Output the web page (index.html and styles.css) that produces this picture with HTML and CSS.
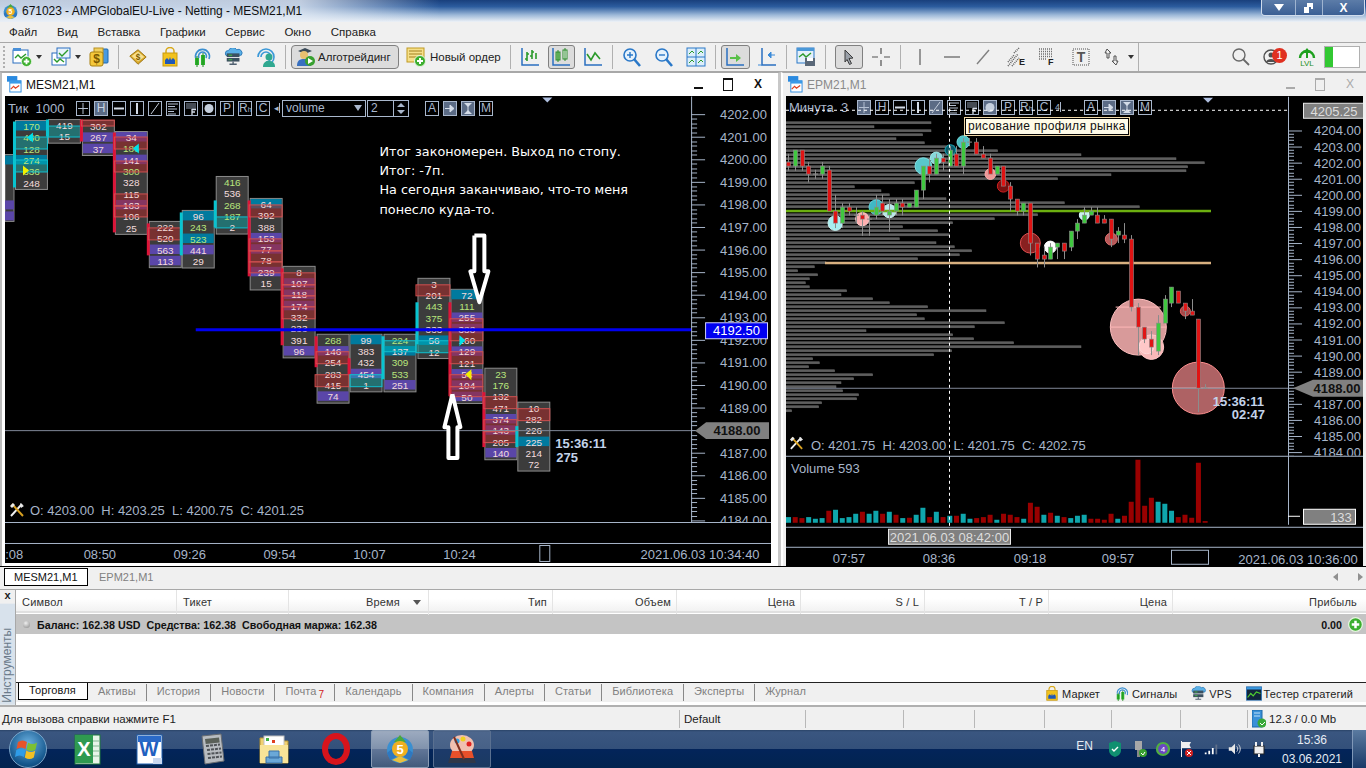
FILE: index.html
```html
<!DOCTYPE html>
<html lang="ru">
<head>
    <meta charset="UTF-8">
    <title>671023 - AMPGlobalEU-Live - Netting - MESM21,M1</title>
    <link rel="stylesheet" href="styles.css">
</head>
<body>
<svg class="defs" width="0" height="0">
    <defs>
        <symbol id="mt5" viewBox="0 0 32 32">
            <circle cx="16" cy="17" r="13" fill="#3a8fd0"/>
            <path d="M16 2l6 7H10z" fill="#4aa83c"/>
            <path d="M3 20l7-6 2 10-6 3zM29 20l-7-6-2 10 6 3z" fill="#2f78c0"/>
            <path d="M8 27l8-4 8 4-8 3z" fill="#e8c040"/>
            <circle cx="16" cy="16" r="8" fill="#f0b020"/>
            <text x="16" y="21" class="mt5-five">5</text>
        </symbol>
        <symbol id="plus" viewBox="0 0 12 12">
            <circle cx="6" cy="6" r="5.5" fill="#3cae2e" stroke="#e6f5e0"/>
            <path d="M6 3v6M3 6h6" stroke="#fff" stroke-width="2"/>
        </symbol>
        <symbol id="tools" viewBox="0 0 16 16">
            <path d="M2 14L13 2" stroke="#f0f0f0" stroke-width="2"/>
            <path d="M3 2l11 12" stroke="#d8a020" stroke-width="2"/>
            <path d="M1 4l3-3 2 2-3 3zM11 1l4 3-3 2z" fill="#e8e8e8"/>
        </symbol>
        <symbol id="bag" viewBox="0 0 20 20">
            <path d="M6 6V4a4 3.5 0 0 1 8 0v2" fill="none" stroke="#d8a818" stroke-width="1.5"/>
            <rect x="3" y="6" width="14" height="13" fill="#f2c21c" stroke="#c89a10"/>
            <path d="M5 17v-4l2-2 2 2 1-3 1 3 2-2 2 2v4z" fill="#1f58b8"/>
        </symbol>
        <symbol id="signal" viewBox="0 0 20 20">
            <path d="M4 12a7 7 0 1 1 13 0M7 11a4 4 0 1 1 7 0" fill="none" stroke="#3a8fd0" stroke-width="1.6"/>
            <rect x="3" y="11" width="4" height="7" fill="#2eb52e"/>
            <rect x="9" y="8" width="4" height="10" fill="#2eb52e"/>
            <path d="M5 9v11M11 6v14" stroke="#1e8a1e"/>
        </symbol>
        <symbol id="vps" viewBox="0 0 22 20">
            <path d="M4 9a3 3 0 0 1 1-6 5 5 0 0 1 9-1 4 4 0 0 1 5 6z" fill="#5ab0e6" stroke="#2a78b8"/>
            <rect x="3" y="6" width="14" height="4" fill="#3c5060"/>
            <rect x="3" y="11" width="14" height="4" fill="#3c5060"/>
            <path d="M5 8h4M5 13h4" stroke="#46d040"/>
            <path d="M10 15v3M6 18h8" stroke="#506070" stroke-width="1.5"/>
        </symbol>
        <symbol id="tester" viewBox="0 0 20 18">
            <rect x=".5" y=".5" width="19" height="17" fill="#10243c" stroke="#2a78c0"/>
            <rect x="1" y="1" width="18" height="3" fill="#3a98e0"/>
            <path d="M2 14l4-5 3 3 4-5 5 2" fill="none" stroke="#50d030" stroke-width="1.5"/>
        </symbol>
        <!-- glyphs of the buttons inside the charts -->
        <symbol id="ct-plus" viewBox="0 0 12 13"><path d="M6 1v11M1 6.500h10" stroke="#b4c0d2"/></symbol>
        <symbol id="ct-bar" viewBox="0 0 12 13"><path d="M1 6.500h10" stroke="#d4dce8" stroke-width="2"/></symbol>
        <symbol id="ct-vbar" viewBox="0 0 12 13"><path d="M6 1v11" stroke="#d4dce8" stroke-width="2"/></symbol>
        <symbol id="ct-slash" viewBox="0 0 12 13"><path d="M2 12L10 1" stroke="#c4cedc"/></symbol>
        <symbol id="ct-lines" viewBox="0 0 12 13"><path d="M1 2h10M1 4.500h7M1 7h9M1 9.500h6M1 12h8" stroke="#b4c0d2"/></symbol>
        <symbol id="ct-f" viewBox="0 0 12 13"><path d="M1 2h10M1 4h10M1 6h10" stroke="#8a96a8"/><path d="M7 7v6M7 7.500h4M7 10h3" stroke="#d4dce8" stroke-width="1.300"/></symbol>
        <symbol id="ct-dot" viewBox="0 0 12 13"><circle cx="6" cy="6.500" r="4.500" fill="#c4cedc"/></symbol>
        <symbol id="ct-arrow" viewBox="0 0 12 13"><path d="M1 6.500h7M6 3l4 3.500L6 10z" stroke="#d4dce8" fill="#d4dce8"/></symbol>
        <symbol id="ct-ibeam" viewBox="0 0 12 13"><path d="M2 1h8L6 5zM2 12h8L6 8z" fill="#d4dce8"/><path d="M6 4v5" stroke="#d4dce8"/></symbol>
    </defs>
</svg>

<header class="titlebar">
    <svg class="title-icon"><use href="#mt5"/></svg>
    <span class="title-text">671023 - AMPGlobalEU-Live - Netting - MESM21,M1</span>
    <div class="win-buttons">
        <span class="win-btn"><svg width="10" height="7" viewBox="0 0 10 7"><path d="M0 0h10L5 7z" fill="#fff"/></svg></span>
        <span class="win-btn narrow"><svg width="10" height="10" viewBox="0 0 10 10"><path d="M3 0h6v6H7V4H3zM0 4h5v6H0z" fill="#fff"/></svg></span>
        <span class="win-btn close">X</span>
    </div>
</header>

<nav class="menubar">
    <span>Файл</span><span>Вид</span><span>Вставка</span><span>Графики</span><span>Сервис</span><span>Окно</span><span>Справка</span>
</nav>

<div class="toolbar">
    <span class="grip"></span>
    <svg class="ico" viewBox="0 0 20 20"><rect x="1" y="3" width="15" height="13" fill="#fff" stroke="#2a6fc0"/><path d="M1 4V1h8v3" fill="#4a90d8"/><path d="M3 11l3-3 3 3 5-4" fill="none" stroke="#2a9a2a" stroke-width="1.4"/><use href="#plus" x="9" y="9" width="11" height="11"/></svg>
    <i class="caret"></i>
    <svg class="ico m9" viewBox="0 0 20 20"><rect x="1" y="6" width="14" height="12" fill="#fff" stroke="#2a6fc0"/><rect x="6" y="1" width="13" height="10" fill="#e8f2fc" stroke="#2a6fc0"/><path d="M3 12l3 3 3-3 4 3" fill="none" stroke="#2a9a2a" stroke-width="1.4"/><path d="M8 6l3 3 6-6" fill="none" stroke="#2a9a2a" stroke-width="1.4"/></svg>
    <i class="caret"></i>
    <svg class="ico m8" viewBox="0 0 20 20"><rect x="9" y="2" width="10" height="14" rx="1" fill="#4a9ae0" stroke="#1c68b0"/><rect x="5" y="1" width="9" height="6" fill="#f0d060" stroke="#b89020"/><rect x="1" y="5" width="13" height="14" rx="2" fill="#f4c83c" stroke="#a88010"/><text x="7.5" y="16" class="dollar">$</text></svg>
    <span class="sep"></span>
    <svg class="ico" viewBox="0 0 22 20"><path d="M2 9l9-7 9 8-9 8z" fill="#d8a828" stroke="#987010"/><path d="M4 9l7-5 7 6-7 5z" fill="#f8e090"/><text x="11" y="13" class="dollar small">$</text></svg>
    <svg class="ico g12" viewBox="0 0 20 20"><use href="#bag"/></svg>
    <svg class="ico g12" viewBox="0 0 20 20"><use href="#signal"/></svg>
    <svg class="ico g12" viewBox="0 0 22 20"><use href="#vps"/></svg>
    <svg class="ico g12" viewBox="0 0 20 20"><path d="M2 10a8 8 0 1 1 8 8M5 10a5 5 0 1 1 5 5" fill="none" stroke="#3a98d8" stroke-width="1.6"/><circle cx="13" cy="10" r="3.5" fill="#30a890"/><path d="M7 20c0-5 3-6 6-6s6 1 6 6z" fill="#30a890"/></svg>
    <span class="sep"></span>
    <button class="pill algo">
        <svg class="ico" viewBox="0 0 20 20"><path d="M3 4l7-3 7 3-7 3z" fill="#3a4a58"/><circle cx="9" cy="8" r="4" fill="#e8c070"/><path d="M2 19c0-6 3-7 7-7s7 1 7 7z" fill="#3870c0"/><circle cx="15" cy="14" r="5" fill="#38a030"/><path d="M13 11l5 3-5 3z" fill="#fff"/></svg>
        Алготрейдинг
    </button>
    <span class="order">
        <svg class="ico" viewBox="0 0 20 20"><rect x="1" y="1" width="17" height="14" fill="#f6e08a" stroke="#c09a20"/><path d="M3 4h13M3 7h13M3 10h9" stroke="#a08020"/><use href="#plus" x="8" y="8" width="12" height="12"/></svg>
        Новый ордер
    </span>
    <span class="sep"></span>
    <svg class="ico" viewBox="0 0 20 20"><path d="M2 1v17h17" fill="none" stroke="#2a6fc0" stroke-width="1.5"/><path d="M7 5v9M5 12h2M7 7h2M12 3v9M10 9h2M12 5h2M16 6v6" stroke="#2a9a2a" stroke-width="1.6" fill="none"/></svg>
    <span class="boxed b1"><svg class="ico" viewBox="0 0 20 20"><path d="M2 1v17h17" fill="none" stroke="#2a6fc0" stroke-width="1.5"/><rect x="5" y="5" width="4" height="8" fill="#8fd080" stroke="#2a8a2a"/><rect x="12" y="3" width="4" height="9" fill="#fff" stroke="#2a8a2a"/><path d="M7 3v12M14 1v13" stroke="#2a8a2a"/></svg></span>
    <svg class="ico" viewBox="0 0 20 20"><path d="M2 1v17h17" fill="none" stroke="#2a6fc0" stroke-width="1.5"/><path d="M4 7l4 6 4-7 5 6" fill="none" stroke="#2a9a2a" stroke-width="1.6"/></svg>
    <span class="sep"></span>
    <svg class="ico" viewBox="0 0 20 20"><circle cx="8" cy="8" r="6" fill="#e6f2fc" stroke="#2a78c8" stroke-width="1.6"/><path d="M8 5v6M5 8h6" stroke="#2a78c8" stroke-width="1.4"/><path d="M12 12l6 7" stroke="#2a78c8" stroke-width="2.6"/></svg>
    <svg class="ico g12" viewBox="0 0 20 20"><circle cx="8" cy="8" r="6" fill="#e6f2fc" stroke="#2a78c8" stroke-width="1.6"/><path d="M5 8h6" stroke="#2a78c8" stroke-width="1.4"/><path d="M12 12l6 7" stroke="#2a78c8" stroke-width="2.6"/></svg>
    <svg class="ico g12" viewBox="0 0 20 20"><rect x="1" y="1" width="18" height="18" fill="#dceefa" stroke="#2a78c8"/><path d="M10 1v18M1 10h18" stroke="#2a78c8"/><path d="M3 7l3-3 2 2M12 7l3-3 2 2M3 16l3-3 2 2M12 16l3-3 2 2" fill="none" stroke="#2a9a2a"/></svg>
    <span class="sep"></span>
    <span class="boxed b2"><svg class="ico" viewBox="0 0 20 20"><path d="M2 1v17h17" fill="none" stroke="#2a6fc0" stroke-width="1.5"/><path d="M5 10h6V7l5 4-5 4v-3H5z" fill="#58c048"/></svg></span>
    <svg class="ico" viewBox="0 0 20 20"><path d="M5 1v17h14" fill="none" stroke="#2a6fc0" stroke-width="1.5"/><path d="M1 18h4M11 8h7M11 8l3-3v6z" fill="#3a8ad8" stroke="#3a8ad8"/></svg>
    <span class="sep"></span>
    <svg class="ico" viewBox="0 0 20 20"><rect x="1" y="1" width="17" height="15" fill="#e4f0fa" stroke="#2a78c8"/><rect x="1" y="1" width="17" height="3" fill="#4a98d8"/><path d="M3 10l4-3 3 3 5-4" fill="none" stroke="#2a9a2a" stroke-width="1.4"/><rect x="9" y="11" width="10" height="8" fill="#5a6878"/><rect x="11" y="11" width="6" height="3" fill="#fff"/></svg>
    <span class="sep"></span>
    <span class="boxed b3"><svg class="ico-sm" viewBox="0 0 14 16"><path d="M3 1l8 8-4 .5 2.5 5-2 1-2.500-5L3 13z" fill="#9aa0a8" stroke="#3a3a3a"/></svg></span>
    <svg class="ico" viewBox="0 0 20 20"><path d="M10 1v6M10 13v6M1 10h6M13 10h6" stroke="#505050" stroke-width="1.2"/></svg>
    <span class="sep wide"></span>
    <svg class="ico" viewBox="0 0 20 20"><path d="M10 2v16" stroke="#808080" stroke-width="1.6"/></svg>
    <svg class="ico g12" viewBox="0 0 20 20"><path d="M2 10h16" stroke="#808080" stroke-width="1.6"/></svg>
    <svg class="ico g11" viewBox="0 0 20 20"><path d="M4 17L16 3" stroke="#808080" stroke-width="1.4"/></svg>
    <svg class="ico g14" viewBox="0 0 20 20"><path d="M1 15l6-7M1 19l10-12M5 19l7-8M7 6l5-5" stroke="#606060" stroke-dasharray="1 1" fill="none" stroke-width="1.600"/><text x="12" y="18" class="glyph-b">E</text></svg>
    <svg class="ico g10" viewBox="0 0 20 20"><path d="M2 2h14M2 4.500h14M2 7h14M2 9.500h14" stroke="#707070" stroke-dasharray="1 1" stroke-width="1.300"/><path d="M2 12h8" stroke="#707070" stroke-dasharray="1 1" stroke-width="1.300"/><text x="11" y="18" class="glyph-b">F</text></svg>
    <svg class="ico g14" viewBox="0 0 20 20"><rect x="2" y="2" width="16" height="16" fill="none" stroke="#505050" stroke-dasharray="1 1"/><text x="10" y="15" class="glyph-b mid">T</text></svg>
    <svg class="ico g13" viewBox="0 0 20 20"><path d="M3 2l4 4H5v5H3V6H1zM12 18l-4-4h2V9h2v5h2z" fill="none" stroke="#505050"/></svg>
    <i class="caret dark"></i>
    <span class="sep end"></span>
    <span class="tb-spacer"></span>
    <svg class="ico" viewBox="0 0 20 20"><circle cx="8" cy="8" r="6" fill="none" stroke="#686868" stroke-width="1.4"/><path d="M12 12l6 6" stroke="#686868" stroke-width="1.8"/></svg>
    <span class="profile">
        <svg class="ico" viewBox="0 0 20 20"><circle cx="8" cy="10" r="7" fill="none" stroke="#505050" stroke-width="1.4"/><circle cx="8" cy="8" r="2.5" fill="#505050"/><path d="M3 15c1-4 9-4 10 0" fill="#505050"/></svg>
        <b class="badge">1</b>
    </span>
    <span class="lvl">
        <svg width="18" height="15" viewBox="0 0 18 15"><path d="M2 13a7 7 0 0 1 14 0" fill="none" stroke="#1ea01e" stroke-width="2.4"/><path d="M9 3l4 5h-3v5H8V8H5z" fill="#1ea01e"/></svg>
        <span>LVL</span>
    </span>
    <span class="meter"><i></i></span>
</div>

<main class="mdi">
    <section class="win active">
        <div class="win-head">
            <svg class="doc-icon" viewBox="0 0 16 18"><rect x="0" y="0" width="11" height="6" fill="#2a8ae0"/><rect x="3" y="5" width="12" height="12" fill="#fff" stroke="#2a8ae0"/><rect x="3" y="5" width="12" height="3" fill="#3a9ae8"/><path d="M4 14l3-3 2 2 4-3" fill="none" stroke="#e04020" stroke-width="1.3"/></svg>
            <span class="doc-title">MESM21,M1</span>
            <span class="doc-btns"><i class="d-min"></i><i class="d-max"></i><i class="d-close">X</i></span>
        </div>
        <div class="chart" id="chart-left">
            <div class="strip strip-left">
                <span class="strip-label">Тик&nbsp;&nbsp;1000</span>
                <span class="ct"><svg><use href="#ct-plus"/></svg></span><span class="ct on">H</span><span class="ct"><svg><use href="#ct-bar"/></svg></span><span class="ct"><svg><use href="#ct-vbar"/></svg></span><span class="ct"><svg><use href="#ct-slash"/></svg></span><span class="ct"><svg><use href="#ct-lines"/></svg></span><span class="ct"><svg><use href="#ct-f"/></svg></span><span class="ct"><svg><use href="#ct-dot"/></svg></span><span class="ct">P</span><span class="ct">R<small>h</small></span><span class="ct">C</span>
                <span class="ct-mini">◂</span>
                <span class="combo">volume<i class="combo-arrow"></i></span>
                <span class="spin">2</span>
                <span class="spin-btns"><i></i><i></i></span>
                <span class="ct push">A</span><span class="ct on"><svg><use href="#ct-arrow"/></svg></span><span class="ct on"><svg><use href="#ct-ibeam"/></svg></span><span class="ct">M</span>
            </div>
            <svg class="plot" id="plot-left" viewBox="5 97 767 467"></svg>
        </div>
    </section>
    <section class="win">
        <div class="win-head dim">
            <svg class="doc-icon" viewBox="0 0 16 18"><rect x="0" y="0" width="11" height="6" fill="#2a8ae0"/><rect x="3" y="5" width="12" height="12" fill="#fff" stroke="#2a8ae0"/><rect x="3" y="5" width="12" height="3" fill="#3a9ae8"/><path d="M4 14l3-3 2 2 4-3" fill="none" stroke="#e04020" stroke-width="1.3"/></svg>
            <span class="doc-title">EPM21,M1</span>
            <span class="doc-btns"><i class="d-min"></i><i class="d-max"></i><i class="d-close">X</i></span>
        </div>
        <div class="chart" id="chart-right">
            <div class="strip strip-right">
                <span class="strip-label">Минута&nbsp;&nbsp;3</span>
                <span class="ct on"><svg><use href="#ct-plus"/></svg></span><span class="ct">H</span><span class="ct"><svg><use href="#ct-bar"/></svg></span><span class="ct"><svg><use href="#ct-vbar"/></svg></span><span class="ct on"><svg><use href="#ct-slash"/></svg></span><span class="ct"><svg><use href="#ct-lines"/></svg></span><span class="ct"><svg><use href="#ct-f"/></svg></span><span class="ct on"><svg><use href="#ct-dot"/></svg></span><span class="ct">P</span><span class="ct">R<small>h</small></span><span class="ct">C</span>
                <span class="ct-mini">4</span>
                <span class="ct push2">A</span><span class="ct on"><svg><use href="#ct-arrow"/></svg></span><span class="ct on"><svg><use href="#ct-ibeam"/></svg></span><span class="ct">M</span>
            </div>
            <svg class="plot" id="plot-right" viewBox="786 97 577 469"></svg>
            <div class="hint">рисование профиля рынка</div>
        </div>
    </section>
</main>

<div class="doc-tabs">
    <span class="doc-tab on">MESM21,M1</span>
    <span class="doc-tab">EPM21,M1</span>
    <span class="tab-arrows"><i class="ar-l"></i><i class="ar-r"></i></span>
</div>

<section class="terminal">
    <aside class="side">
        <b class="side-x">x</b>
        <span class="side-label">Инструменты</span>
    </aside>
    <div class="term-main">
        <div class="grid-head">
            <span class="left">Символ</span>
            <span class="left">Тикет</span>
            <span class="time-col">Время<i class="sort"></i></span>
            <span>Тип</span><span>Объем</span><span>Цена</span><span>S / L</span><span>T / P</span><span>Цена</span><span>Прибыль</span>
        </div>
        <div class="balance">
            <i class="dot"></i>
            <b>Баланс: 162.38 USD&nbsp; Средства: 162.38&nbsp; Свободная маржа: 162.38</b>
            <b class="bal-profit">0.00</b>
            <svg class="bal-plus"><use href="#plus"/></svg>
        </div>
        <div class="term-empty"></div>
        <div class="term-tabs">
            <span class="t-tab on">Торговля</span>
            <span class="t-tab">Активы</span><span class="t-tab">История</span><span class="t-tab">Новости</span>
            <span class="t-tab">Почта<sub class="mail">7</sub></span>
            <span class="t-tab">Календарь</span><span class="t-tab">Компания</span><span class="t-tab">Алерты</span><span class="t-tab">Статьи</span><span class="t-tab">Библиотека</span><span class="t-tab">Эксперты</span><span class="t-tab last">Журнал</span>
            <span class="t-links">
                <span><svg viewBox="0 0 20 20"><use href="#bag"/></svg>Маркет</span>
                <span><svg viewBox="0 0 20 20"><use href="#signal"/></svg>Сигналы</span>
                <span><svg viewBox="0 0 22 20"><use href="#vps"/></svg>VPS</span>
                <span><svg viewBox="0 0 20 18"><use href="#tester"/></svg>Тестер стратегий</span>
            </span>
        </div>
    </div>
</section>

<footer class="statusbar">
    <span class="st st-help">Для вызова справки нажмите F1</span>
    <span class="st st-profile">Default</span>
    <span class="st w98"></span><span class="st w71"></span><span class="st w70"></span><span class="st w67"></span><span class="st w69"></span><span class="st w67"></span>
    <span class="st st-net">
        <svg width="14" height="18" viewBox="0 0 14 18"><rect x="0" y="0" width="10" height="17" fill="#3a90d8" stroke="#1c68a8"/><path d="M2 3h6M2 6h6" stroke="#bfe0f8"/><circle cx="10" cy="13" r="4.5" fill="#38a838"/><path d="M8 13l2 2 3-3" stroke="#fff" fill="none"/></svg>
        12.3 / 0.0 Mb
    </span>
</footer>

<div class="taskbar">
    <span class="orb">
        <svg width="26" height="26" viewBox="0 0 26 26"><path d="M3 6c3-2 6-2 9 0l-1.500 7c-3-2-6-2-9 0z" fill="#e8542a"/><path d="M13 6.500c3 2 6 2 9 0l-1.500 7c-3 2-6 2-9 0z" fill="#7cc034"/><path d="M1.300 14c3-2 6-2 9 0L9 21c-3-2-6-2-9 0z" fill="#2f9ce8"/><path d="M11.300 14.500c3 2 6 2 9 0l-1.500 7c-3 2-6 2-9 0z" fill="#f4c024"/></svg>
    </span>
    <span class="task"><svg viewBox="0 0 32 32"><rect x="3" y="2" width="25" height="29" fill="#e8f4e8" stroke="#1f7a3c"/><path d="M3 2h18v28H3z" fill="#2f9a50"/><text x="12" y="23" class="task-letter">X</text><path d="M21 8h7M21 13h7M21 18h7M21 23h7" stroke="#80b890"/></svg></span>
    <span class="task"><svg viewBox="0 0 32 32"><rect x="3" y="2" width="25" height="29" fill="#fff" stroke="#2060b0"/><rect x="4" y="3" width="23" height="6" fill="#2a6ac8"/><text x="15" y="23" class="task-letter word">W</text><path d="M19 25h9v6h-9z" fill="#c8d8f0"/></svg></span>
    <span class="task"><svg viewBox="0 0 32 32"><path d="M6 3l19-2 3 27-19 3z" fill="#b8bcc0" stroke="#686c70"/><path d="M9 6l14-1.500.7 5-14 1.500z" fill="#5a6058"/><path d="M10 13l14-1.500M11 17l14-1.500M11.500 21l14-1.500M12 25l14-1.500" stroke="#505458" stroke-width="2" stroke-dasharray="3 1"/></svg></span>
    <span class="task"><svg viewBox="0 0 32 32"><path d="M2 5h11l2 3h15v22H2z" fill="#f0d070" stroke="#b09030"/><rect x="6" y="3" width="20" height="10" fill="#fff" stroke="#c0c0c0"/><path d="M8 5h3v3H8z" fill="#40b040"/><path d="M14 7h3v3h-3z" fill="#e04020"/><path d="M2 12h28v18H2z" fill="#f8e498"/><path d="M8 24h16v6H8zM11 18h10v7H11z" fill="#6aa8d8" stroke="#3870a8"/></svg></span>
    <span class="task"><svg viewBox="0 0 32 32"><ellipse cx="16" cy="16" rx="11" ry="13" fill="none" stroke="#d8141c" stroke-width="6"/></svg></span>
    <span class="task running"><svg viewBox="0 0 32 32"><use href="#mt5"/></svg></span>
    <span class="task running pale"><svg viewBox="0 0 32 32"><ellipse cx="16" cy="12" rx="12" ry="10" fill="#f0c0b0"/><circle cx="11" cy="8" r="2.500" fill="#30a0e0"/><circle cx="17" cy="6" r="2.500" fill="#f0d020"/><circle cx="23" cy="11" r="2.500" fill="#e02020"/><path d="M4 24h24l2 6H2z" fill="#303848"/><path d="M6 18h20l2 7H4z" fill="#e8502a"/><path d="M8 4l10 22" stroke="#803020" stroke-width="2"/></svg></span>
    <span class="tray">
        <span class="lang">EN</span>
        <svg viewBox="0 0 16 18"><path d="M8 1l6 2v7c0 4-3 6-6 7-3-1-6-3-6-7V3z" fill="#109070"/><path d="M5 9l2 2 4-4" stroke="#fff" fill="none" stroke-width="1.4"/></svg>
        <svg viewBox="0 0 16 18"><rect x="4" y="1" width="7" height="9" fill="#a8a8a8"/><rect x="6" y="10" width="3" height="7" fill="#888"/><circle cx="12" cy="13" r="4" fill="#38a030"/><path d="M10 13l2 2 2-3" stroke="#fff" fill="none"/></svg>
        <svg viewBox="0 0 18 18"><circle cx="9" cy="9" r="8" fill="#50b040"/><circle cx="9" cy="9" r="5.500" fill="#6a48c0"/><text x="9" y="12" class="tray-num">4</text></svg>
        <svg viewBox="0 0 16 18"><path d="M2 1h1v16H2zM3 2h9l-1.500 3L12 8H3z" fill="#f0f0f0"/><circle cx="10" cy="13" r="4" fill="#d02020"/><path d="M8 11l4 4M12 11l-4 4" stroke="#fff"/></svg>
        <svg viewBox="0 0 18 18"><path d="M2 13h2v2H2zM6 11h2v4H6zM10 8h2v7h-2z" fill="#fff"/><path d="M14 4h2v11h-2z" fill="#60708a"/></svg>
        <svg viewBox="0 0 18 18"><path d="M2 7h3l4-4v12l-4-4H2z" fill="#e8e8e8"/><path d="M11 6c1.500 2 1.500 4 0 6M13 4c2.500 3 2.500 7 0 10" stroke="#e8e8e8" fill="none"/></svg>
        <svg viewBox="0 0 16 18"><rect x="3" y="6" width="10" height="8" fill="#f0f0f0" stroke="#222"/><path d="M5 2v4M11 2v4M8 14v3" stroke="#f0f0f0" stroke-width="2"/></svg>
        <span class="clock"><span>15:36</span><span>03.06.2021</span></span>
    </span>
    <span class="show-desktop"></span>
</div>

<script src="chart.js"></script>
</body>
</html>
```

FILE: styles.css
```css
* {
    box-sizing: border-box;
}
html, body {
    margin: 0;
    padding: 0;
    width: 1366px;
    height: 768px;
    overflow: hidden;
}
body {
    display: flex;
    flex-direction: column;
    font-family: "Liberation Sans", Arial, sans-serif;
    font-size: 11px;
    color: #1c1c1c;
    background: #f0f0f0;
}
.defs {
    position: absolute;
}
.mt5-five {
    font: bold 13px "Liberation Sans", sans-serif;
    fill: #fff;
    text-anchor: middle;
}

/* title bar */
.titlebar {
    height: 22px;
    display: flex;
    align-items: center;
    position: relative;
    background:
        linear-gradient(90deg, rgba(232,238,246,.8) 0, rgba(232,238,246,.8) 300px, rgba(232,238,246,0) 440px),
        linear-gradient(180deg, #193f7c 0, #2c5c9e 30%, #9db8d8 68%, #eef2f7 100%);
}
.title-icon {
    width: 17px;
    height: 17px;
    margin: 2px 3px 0 2px;
}
.title-text {
    font-size: 12px;
    color: #101010;
    white-space: nowrap;
    letter-spacing: -.04px;
}
.win-buttons {
    position: absolute;
    right: 1px;
    top: 0;
    height: 16px;
    display: flex;
    border: 1px solid #d0dcec;
    border-top: 0;
    border-radius: 0 0 4px 4px;
    overflow: hidden;
}
.win-btn {
    width: 34px;
    display: flex;
    align-items: center;
    justify-content: center;
    background: linear-gradient(180deg, #5c7ca8, #3b5f94);
    border-right: 1px solid #9fb4d0;
}
.win-btn.narrow {
    width: 27px;
}
.win-btn.close {
    width: 41px;
    border: 0;
    color: #fff;
    font-weight: bold;
    font-size: 12px;
}

/* menu */
.menubar {
    height: 20px;
    display: flex;
    align-items: center;
    gap: 19.7px;
    padding-left: 9px;
    font-size: 11.5px;
    color: #222;
}

/* toolbar */
.toolbar {
    height: 30px;
    display: flex;
    align-items: center;
    padding-left: 3px;
    border-top: 1px solid #a8a8a8;
    border-bottom: 1px solid #a8a8a8;
}
.grip {
    width: 2px;
    height: 22px;
    margin-right: 7px;
    border-left: 2px dotted #b0b0b0;
}
.ico {
    width: 20px;
    height: 20px;
    flex: none;
}
.ico-sm {
    width: 14px;
    height: 16px;
}
.caret {
    width: 0;
    height: 0;
    margin: 0 0 0 4px;
    border: 3.5px solid transparent;
    border-top: 4px solid #333;
    border-bottom: 0;
}
.m9 { margin-left: 9px; }
.m8 { margin-left: 8px; }
.g10 { margin-left: 10px; }
.g11 { margin-left: 11px; }
.g12 { margin-left: 12px; }
.g13 { margin-left: 13px; }
.g14 { margin-left: 14px; }
.sep {
    width: 1px;
    height: 24px;
    margin: 0 9px;
    background: #b0b0b0;
}
.sep.wide {
    margin-right: 9px;
}
.sep.end {
    margin-left: 4px;
    height: 28px;
}
.dollar {
    font: bold 12px "Liberation Sans", sans-serif;
    fill: #7a5800;
    text-anchor: middle;
}
.dollar.small {
    font-size: 9px;
}
.glyph-b {
    font: bold 9px "Liberation Sans", sans-serif;
    fill: #222;
}
.glyph-b.mid {
    font-size: 14px;
    text-anchor: middle;
    fill: #555;
}
.pill {
    width: 108px;
    height: 24px;
    padding: 0 0 0 3px;
    margin-left: -4px;
    display: flex;
    align-items: center;
    gap: 3px;
    font: 11.5px "Liberation Sans", sans-serif;
    color: #222;
    background: #dcdcdc;
    border: 1px solid #808080;
    border-radius: 4px;
}
.order {
    display: flex;
    align-items: center;
    gap: 4px;
    margin-left: 7px;
    font-size: 11.5px;
    color: #222;
}
.boxed {
    height: 24px;
    display: flex;
    align-items: center;
    justify-content: center;
    background: #dcdcdc;
    border: 1px solid #808080;
    border-radius: 3px;
}
.b1 {
    width: 27px;
    margin: 0 8px;
}
.b2 {
    width: 29px;
    margin: 0 7px 0 -4px;
}
.b3 {
    width: 28px;
    margin: 0 8px 0 0;
}
.tb-spacer {
    flex: 1;
}
.profile {
    position: relative;
    margin-left: 12px;
    width: 24px;
    height: 20px;
}
.badge {
    position: absolute;
    left: 9px;
    top: 1px;
    width: 15px;
    height: 15px;
    border-radius: 50%;
    background: #e03020;
    color: #fff;
    font-size: 11px;
    font-weight: normal;
    line-height: 15px;
    text-align: center;
}
.lvl {
    margin-left: 11px;
    width: 18px;
    display: flex;
    flex-direction: column;
    align-items: center;
    font-size: 8px;
    line-height: 8px;
    color: #1e901e;
}
.meter {
    width: 36px;
    height: 22px;
    margin: 0 6px 0 8px;
    background: #fff;
    border: 1px solid #b0b0b0;
    display: flex;
}
.meter i {
    width: 8px;
    background: #32c832;
}

/* chart windows */
.mdi {
    height: 496px;
    display: grid;
    grid-template-columns: 781px 585px;
    background: #c8c8c8;
}
.win {
    display: flex;
    flex-direction: column;
    padding: 0 6px 3px 5px;
    background: #fff;
    border-left: 2px solid #bdbdbd;
    border-top: 1px solid #a8a8a8;
}
.win + .win {
    padding: 0 3px 0 3px;
    background: #f0f0f0;
    border-left: 2px solid #fff;
}
.win.active {
    padding: 0 7px 3px 3px;
    border-right: 3px solid #c8c8c8;
}
.win-head {
    height: 23px;
    display: flex;
    align-items: center;
    gap: 4px;
    font-size: 12px;
    color: #111;
    flex: none;
}
.win-head.dim {
    color: #8a8a8a;
}
.doc-icon {
    width: 15px;
    height: 17px;
    margin-left: 2px;
}
.doc-title {
    margin-top: 2px;
}
.doc-btns {
    margin-left: auto;
    display: flex;
    align-items: center;
    width: 88px;
    justify-content: space-between;
    padding: 0 9px 0 11px;
}
.win-head .d-min {
    width: 9px;
    height: 2px;
    background: #111;
    margin-top: 7px;
}
.win-head .d-max {
    width: 10px;
    height: 13px;
    border: 1px solid #111;
    border-top-width: 2px;
}
.win-head .d-close {
    font-style: normal;
    font-size: 12px;
    font-weight: bold;
}
.win-head.dim .d-min {
    background: #aaa;
}
.win-head.dim .d-max {
    border-color: #aaa;
}
.win-head.dim .d-close {
    color: #aaa;
    font-weight: normal;
}
.chart {
    position: relative;
    flex: 1;
    background: #000;
    overflow: hidden;
}
.plot {
    position: absolute;
    left: 0;
    top: 0;
    width: 100%;
    height: 100%;
}
.strip {
    position: absolute;
    top: 4px;
    left: 0;
    right: 0;
    display: flex;
    align-items: center;
    gap: 4px;
    color: #a9b7cc;
    font-size: 13px;
}
.strip-label {
    white-space: nowrap;
}
.strip-left .strip-label {
    width: 67px;
    padding-left: 3px;
}
.strip-right .strip-label {
    width: 67px;
    padding-left: 3px;
}
.ct {
    width: 14px;
    height: 15px;
    flex: none;
    border: 1px solid #a9b7cc;
    font-size: 12px;
    line-height: 13px;
    text-align: center;
    overflow: hidden;
}
.ct svg {
    display: block;
    width: 12px;
    height: 13px;
}
.ct small {
    font-size: 7px;
}
.ct.on {
    background: #5b6b85;
    color: #c8d2e0;
}
.ct-mini {
    width: 6px;
    font-size: 9px;
    border-right: 1px solid #a9b7cc;
}
.combo {
    width: 84px;
    height: 17px;
    margin-left: -2px;
    padding-left: 3px;
    display: flex;
    align-items: center;
    justify-content: space-between;
    border: 1px solid #a9b7cc;
    font-size: 12px;
}
.combo-arrow {
    margin-right: 3px;
    border: 4px solid transparent;
    border-top: 6px solid #a9b7cc;
    border-bottom: 0;
}
.spin {
    width: 27px;
    height: 17px;
    margin-left: -3px;
    padding-left: 3px;
    border: 1px solid #a9b7cc;
    font-size: 12px;
}
.spin-btns {
    width: 15px;
    height: 17px;
    margin-left: -4px;
    display: flex;
    flex-direction: column;
    justify-content: space-around;
    align-items: center;
    border: 1px solid #a9b7cc;
    border-left: 0;
}
.spin-btns i {
    border: 4px solid transparent;
    border-bottom: 4px solid #a9b7cc;
    border-top: 0;
}
.spin-btns i + i {
    border-top: 4px solid #a9b7cc;
    border-bottom: 0;
}
.push {
    margin-left: 12px;
}
.push2 {
    margin-left: 19px;
}
.hint {
    position: absolute;
    left: 178px;
    top: 21px;
    height: 19px;
    padding: 0 3px;
    background: #fffbe8;
    border: 1px solid #f0d8a8;
    outline: 1px solid #000;
    outline-offset: -2px;
    color: #111;
    font-size: 12px;
    line-height: 17px;
    letter-spacing: .35px;
    white-space: nowrap;
}

/* chart drawing, the svg is filled by chart.js */
.plot text {
    font-family: "Liberation Sans", Arial, sans-serif;
}
.axis-t {
    font-size: 13px;
    fill: #a7b5c9;
    text-anchor: end;
}
.ohlc {
    font-size: 13px;
    fill: #a7b5c9;
}
.date-t {
    font-size: 13px;
    fill: #a7b5c9;
    text-anchor: middle;
}
.cell-t {
    font-size: 10px;
    text-anchor: middle;
    fill: #f4dcdc;
}
.cell-t.g {
    fill: #b8e67c;
}
.plot .note {
    font-family: "DejaVu Sans", sans-serif;
    font-size: 12.8px;
    fill: #fff;
}
.cntd {
    font-size: 13px;
    font-weight: bold;
    fill: #c3d3ea;
}
.box-t {
    font-size: 13px;
    text-anchor: middle;
}
.box-t.w {
    fill: #fff;
}
.box-t.b {
    fill: #111;
    font-weight: bold;
}
.box-t.l {
    fill: #ddd;
}

/* tabs under the charts */
.doc-tabs {
    height: 20px;
    padding: 1px 0 0 4px;
    display: flex;
    align-items: flex-start;
    background: #f0f0f0;
    border-top: 1px solid #000;
}
.doc-tab {
    height: 18px;
    padding: 3px 10px 0 11px;
    color: #808080;
    line-height: 12px;
}
.doc-tab.on {
    width: 84px;
    padding-left: 9px;
    background: #fff;
    color: #111;
    border: 1px solid #000;
    border-top-color: #000;
    padding-top: 2px;
}
.tab-arrows {
    margin-left: auto;
    display: flex;
    gap: 20px;
    padding: 5px 3px 0 0;
}
.ar-l {
    border: 4px solid transparent;
    border-right: 5px solid #909090;
    border-left: 0;
}
.ar-r {
    border: 4px solid transparent;
    border-left: 5px solid #909090;
    border-right: 0;
}

/* terminal */
.terminal {
    height: 116px;
    display: flex;
    margin-top: 3px;
    border-top: 1px solid #a8a8a8;
}
.side {
    width: 15px;
    display: flex;
    flex-direction: column;
    align-items: center;
    flex: none;
    background: #f0f0f0;
}
.side-x {
    height: 14px;
    font-size: 11px;
    line-height: 11px;
}
.side-label {
    flex: 1;
    width: 100%;
    writing-mode: vertical-rl;
    transform: rotate(180deg);
    background: #d8e2ec;
    color: #6a7a8a;
    font-size: 12px;
    text-align: left;
    line-height: 14px;
    padding-top: 2px;
}
.term-main {
    flex: 1;
    display: flex;
    flex-direction: column;
    background: #fff;
    border-left: 1px solid #a8a8a8;
}
.grid-head {
    height: 23px;
    display: grid;
    grid-template-columns: 161px 112px 140px 124px 124px 124px 124px 124px 124px 193px;
    align-items: center;
    background: linear-gradient(180deg, #fff 0, #fff 40%, #f2f2f2 100%);
    border-bottom: 2px solid #e0e0e0;
    font-size: 11px;
    letter-spacing: .2px;
    color: #333;
}
.grid-head span {
    height: 100%;
    line-height: 25px;
    text-align: right;
    padding: 0 5px 0 6px;
    border-right: 1px solid #e4e4e4;
}
.grid-head .left {
    text-align: left;
}
.grid-head span:last-child {
    padding-right: 9px;
    border: 0;
}
.grid-head .time-col {
    padding-right: 28px;
    position: relative;
}
.sort {
    position: absolute;
    right: 7px;
    top: 10px;
    border: 4px solid transparent;
    border-top: 5px solid #555;
    border-bottom: 0;
}
.balance {
    height: 20px;
    margin-top: 1px;
    display: flex;
    align-items: center;
    padding: 1px 3px 0 7px;
    background: #c4c4c4;
    color: #111;
    font-size: 10.7px;
}
.dot {
    width: 7px;
    height: 7px;
    margin-right: 7px;
    border-radius: 50%;
    background: radial-gradient(circle at 40% 30%, #eee, #888);
}
.bal-profit {
    margin-left: auto;
}
.bal-plus {
    width: 15px;
    height: 15px;
    margin-left: 6px;
}
.term-empty {
    flex: 1;
}
.term-tabs {
    height: 23px;
    display: flex;
    align-items: flex-start;
    padding: 0 0 0 2px;
    background: #f0f0f0;
    border-top: 1px solid #222;
    border-bottom: 3px solid #fff;
    color: #808080;
    letter-spacing: .1px;
}
.t-tab {
    height: 17px;
    padding: 0 10px;
    line-height: 15px;
    margin-top: 1px;
    border-right: 1px solid #888;
    white-space: nowrap;
}
.t-tab.on {
    width: 70px;
    margin-top: 0;
    padding: 0 0 0 10px;
    background: #fff;
    color: #111;
    border: 1px solid #000;
    border-top: 0;
}
.t-tab.last {
    border: 0;
}
.mail {
    color: #d02020;
    font-size: 10px;
    line-height: 0;
    margin-left: 2px;
}
.t-links {
    margin-left: auto;
    display: flex;
    gap: 14px;
    padding: 2px 13px 0 0;
    color: #222;
}
.t-links span {
    display: flex;
    align-items: center;
    gap: 2px;
    height: 17px;
}
.t-links svg {
    width: 16px;
    height: 15px;
}

/* status bar */
.statusbar {
    height: 25px;
    display: flex;
    align-items: center;
    background: #f0f0f0;
    border-top: 2px solid #b0b0b0;
    font-size: 11.5px;
}
.st {
    height: 18px;
    line-height: 18px;
    padding-left: 3px;
    border-right: 1px solid #b8b8b8;
    white-space: nowrap;
}
.st-help {
    width: 680px;
    padding-left: 2px;
}
.st-profile {
    width: 126px;
    padding-left: 4px;
}
.w98 { width: 98px; }
.w71 { width: 71px; }
.w70 { width: 70px; }
.w67 { width: 67px; }
.w69 { width: 69px; }
.st-net {
    border: 0;
    display: flex;
    align-items: center;
    gap: 3px;
    padding-left: 4px;
}

/* windows taskbar */
.taskbar {
    flex: 1;
    display: flex;
    align-items: center;
    position: relative;
    padding-left: 9px;
    background: linear-gradient(180deg, #2a4468 0, #3a5680 2px, #33507a 50%, #03245a 50%, #02244f 100%);
    color: #e6ecf4;
}
.orb {
    width: 38px;
    height: 38px;
    margin-right: 10px;
    display: flex;
    align-items: center;
    justify-content: center;
    border-radius: 50%;
    background: radial-gradient(circle at 50% 35%, #6ab0e0, #14568c 70%, #0a3a60);
    border: 1px solid #7aa4c8;
}
.task {
    width: 62px;
    height: 38px;
    display: flex;
    align-items: center;
    justify-content: center;
}
.task svg {
    width: 32px;
    height: 32px;
}
.task.running {
    width: 58px;
    margin-left: 4px;
    background: linear-gradient(180deg, rgba(255,255,255,.5), rgba(255,255,255,.25));
    border: 1px solid #8a9cb4;
    border-radius: 2px;
}
.task.running.pale {
    background: rgba(255,255,255,.1);
    border-color: #5a7090;
}
.task-letter {
    font: bold 20px "Liberation Sans", sans-serif;
    fill: #fff;
    text-anchor: middle;
}
.task-letter.word {
    fill: #1f60c0;
}
.tray {
    margin-left: auto;
    margin-right: 11px;
    display: flex;
    align-items: center;
    gap: 8px;
    font-size: 12px;
}
.tray svg {
    width: 16px;
    height: 18px;
}
.tray-num {
    font: 9px "Liberation Sans", sans-serif;
    fill: #fff;
    text-anchor: middle;
}
.lang {
    margin-right: 6px;
    margin-top: -6px;
}
.clock {
    width: 86px;
    display: flex;
    flex-direction: column;
    align-items: center;
    gap: 5px;
    margin-left: -6px;
}
.show-desktop {
    position: absolute;
    right: 0;
    top: 0;
    bottom: 0;
    width: 14px;
    background: linear-gradient(180deg, #5a7aa0, #1a3a68);
    border-left: 1px solid #8098b8;
}
```

FILE: chart.js
```js
// draws both charts into their svg, coordinates in the viewBox are page pixels

function rect(x, y, w, h, fill, extra) {
    return '<rect x="' + x + '" y="' + y + '" width="' + w + '" height="' + h + '" fill="' + fill + '" ' + (extra || '') + '/>';
}
function line(x1, y1, x2, y2, color, extra) {
    return '<line x1="' + x1 + '" y1="' + y1 + '" x2="' + x2 + '" y2="' + y2 + '" stroke="' + color + '" ' + (extra || '') + '/>';
}
function text(x, y, cls, str) {
    return '<text x="' + x + '" y="' + y + '" class="' + cls + '">' + str + '</text>';
}
function poly(points, fill, extra) {
    return '<polygon points="' + points + '" fill="' + fill + '" ' + (extra || '') + '/>';
}

const AXIS = '#a7b5c9';

function priceAxis(x, y0, step, from, to, labelX) {
    let s = '';
    for (let p = from; p >= to; p--) {
        const y = y0 + (4188 - p) * step;
        s += line(x, y + 0.5, x + 14, y + 0.5, AXIS);
        for (let k = 1; k < 5; k++) {
            const my = Math.round(y + k * step / 5) + 0.5;
            s += line(x, my, x + 6, my, AXIS);
        }
        // the current price box sits over this one
        if (p !== 4188) s += text(labelX, y + 5, 'axis-t', p + '.00');
    }
    return s;
}

/* ---------- left chart, footprint clusters ---------- */

const TEAL = '#007a9e', PURPLE = '#5a46a8', DARK = '#3c3c3c';

// rows: value + t(eal)/p(urple) background + g for green text
// bar: colour and range of the strip at the left of a column
// over: red or cyan boxes over rows [y1, y2, leftX]
const columns = [
    { x: 16, y: 127, rows: ['170tg', '480g', '128g', '274tg', '336g', '248'], bar: ['c', 122, 188],
      over: [['c', 137, 149, 13], ['c', 160, 172, 15]] },
    { x: 49, y: 126, rows: ['419', '15'], bar: ['c', 120, 137], over: [['c', 126, 137, 47]] },
    { x: 83, y: 127, rows: ['302', '267p', '37p'], bar: ['r', 120, 142], over: [['r', 120, 126, 81]] },
    { x: 116, y: 138, rows: ['34p', '186g', '141p', '300g', '328', '115', '163p', '106', '25'], bar: ['r', 133, 233],
      over: [['r', 137, 149, 114], ['r', 161, 172, 114], ['r', 194, 206, 114], ['r', 206, 217, 114]] },
    { x: 150, y: 228, rows: ['222', '520', '563p', '113p'], bar: ['r', 224, 256], over: [['r', 228, 240, 148]] },
    { x: 183, y: 217, rows: ['96t', '243g', '523tg', '441p', '29'], bar: ['c', 213, 256], over: [] },
    { x: 217, y: 183, rows: ['416g', '536', '268g', '187g', '2'], bar: ['c', 201, 228], over: [['c', 217, 228, 215]] },
    { x: 251, y: 205, rows: ['64t', '392', '388', '153p', '77p', '78', '239p', '15'], bar: ['r', 201, 277],
      over: [['r', 205, 217, 249], ['r', 239, 251, 249], ['r', 251, 262, 249], ['r', 262, 273, 249]] },
    { x: 284, y: 273, rows: ['8', '107p', '118p', '174p', '332', '233', '391', '96p'], bar: ['r', 269, 346],
      over: [['r', 273, 285, 282], ['r', 285, 296, 282], ['r', 296, 307, 282], ['r', 307, 319, 282]] },
    { x: 318, y: 341, rows: ['268g', '146p', '254', '283', '415', '74p'], bar: ['r', 337, 368],
      over: [['r', 352, 364, 316], ['r', 375, 387, 315]] },
    { x: 351, y: 341, rows: ['99t', '383', '432', '454p', '1'], bar: ['r', 359, 375], over: [['c', 375, 387, 350]] },
    { x: 385, y: 341, rows: ['224g', '137t', '309g', '533g', '251p'], bar: ['c', 337, 380], over: [['c', 341, 352, 383]] },
    { x: 419, y: 285, rows: ['3', '201', '443g', '375g', '333', '56t', '12'], bar: ['c', 303, 345],
      over: [['r', 285, 296, 416], ['c', 341, 353, 416]] },
    { x: 452, y: 296, rows: ['72t', '111g', '255p', '388p', '160', '129p', '121', '54p', '104p', '50p'], bar: ['r', 303, 397],
      over: [['r', 319, 330, 450], ['r', 330, 341, 450], ['r', 352, 364, 450], ['r', 375, 387, 450], ['r', 387, 397, 450]] },
    { x: 486, y: 375, rows: ['23g', '176g', '132', '471', '374p', '143p', '205', '140p'], bar: ['r', 393, 448],
      over: [['r', 397, 409, 484], ['r', 420, 432, 484], ['r', 432, 443, 484]] },
    { x: 519, y: 409, rows: ['10', '282', '226', '225t', '214', '72'], bar: ['c', 427, 448], over: [['r', 409, 421, 518]] }
];

function drawClusters() {
    const W = 31, PITCH = 11.33;
    let s = '';
    // the cut off column at the left edge
    s += rect(5, 155, 9, 67, DARK, 'stroke="#8a8a8a"') + rect(5, 156, 9, 9, TEAL) + rect(5, 201, 9, 9, PURPLE) + rect(5, 212, 9, 9, PURPLE);
    columns.forEach(function (c) {
        const top = c.y - 5.5;
        let cells = '', labels = '', fills = '', outlines = '';
        c.rows.forEach(function (r, i) {
            const y = c.y + i * PITCH;
            const val = r.match(/\d+/)[0];
            if (r.indexOf('t') >= 0) cells += rect(c.x, y - 5.5, W, 9.5, TEAL);
            if (r.indexOf('p') >= 0) cells += rect(c.x, y - 5.5, W, 9.5, PURPLE);
            labels += text(c.x + W / 2, y + 3.5, 'cell-t' + (r.indexOf('g') >= 0 ? ' g' : ''), val);
        });
        c.over.forEach(function (o) {
            const red = o[0] === 'r', w = c.x + W - o[3], h = o[2] - o[1];
            fills += rect(o[3] + 0.5, o[1] + 0.5, w, h, red ? 'rgba(170,40,40,.55)' : 'rgba(0,190,190,.4)');
            outlines += rect(o[3] + 0.5, o[1] + 0.5, w, h, 'none', 'stroke="' + (red ? '#d05050' : '#10c0d0') + '"');
        });
        s += rect(c.x - 0.5, top - 0.5, W + 1, c.rows.length * PITCH + 1, DARK, 'stroke="#8c8c8c"');
        s += cells + fills + labels;
        s += rect(c.x - 3, c.bar[1], 3, c.bar[2] - c.bar[1], c.bar[0] === 'r' ? '#dc1438' : '#08c4d0');
        s += outlines;
    });
    // delta markers
    s += poly('27,138 33,133 33,143', '#00e0e8') + poly('133,149 139,144 139,154', '#00e0e8');
    s += poly('23,166 29,171 23,176', '#f0f000') + poly('460,336 466,341 460,347', '#00e0e8') + poly('472,370 466,375 472,381', '#f0f000');
    return s;
}

function arrow(pts) {
    return '<polyline points="' + pts + '" fill="#000" stroke="#fff" stroke-width="4" stroke-linejoin="round"/>';
}

function drawLeft() {
    let s = '';
    s += priceAxis(692, 431, 22.6, 4202, 4184, 768);
    s += line(692.5, 97, 692.5, 523, AXIS);
    s += drawClusters();
    // blocks the part of the axis under the bottom strip
    s += rect(5, 524, 767, 40, '#000');
    s += line(5, 523.5, 772, 523.5, AXIS) + line(5, 544.5, 772, 544.5, AXIS);
    s += line(5, 431.5, 692, 431.5, '#808898');
    s += rect(196, 329, 496, 3, '#0000f0');
    s += rect(706.5, 323.5, 62, 16, '#0000f0', 'stroke="#d0d0ff"') + text(737.5, 336, 'box-t w', '4192.50');
    s += poly('696,431.500 707,423 770,423 770,440 707,440', '#808080') + text(738, 436, 'box-t b', '4188.00');
    s += poly('543,98 553,98 548,103', '#b0c0e0');
    s += text(380, 157, 'note', 'Итог закономерен. Выход по стопу.');
    s += text(380, 176, 'note', 'Итог: -7п.');
    s += text(380, 195, 'note', 'На сегодня заканчиваю, что-то меня');
    s += text(380, 215, 'note', 'понесло куда-то.');
    s += arrow('475,236 485,236 485,272 489,272 480,303 471,272 475,272 475,236');
    s += arrow('453,395 461,428 458,428 458,459 449,459 449,428 445,428 453,395');
    s += text(556, 449, 'cntd', '15:36:11') + text(557, 463, 'cntd', '275');
    s += '<use href="#tools" x="9" y="503" width="16" height="16"/>';
    s += text(30, 516, 'ohlc', 'O: 4203.00&nbsp;&nbsp;H: 4203.25&nbsp;&nbsp;L: 4200.75&nbsp;&nbsp;C: 4201.25');
    s += text(7, 560, 'date-t', '08:08');
    [['08:50', 100], ['09:26', 190], ['09:54', 280], ['10:07', 370], ['10:24', 460]].forEach(function (t) {
        s += text(t[1], 560, 'date-t', t[0]);
    });
    s += rect(540.5, 546.5, 10, 16, 'none', 'stroke="' + AXIS + '"');
    s += text(701, 560, 'date-t', '2021.06.03 10:34:40');
    document.getElementById('plot-left').innerHTML = s;
}

/* ---------- right chart, candles with market profile ---------- */

// x and y are read from the chart at 3x: page x = 785 + x/3, page y = 130 + y/3
const zx = function (v) { return 785 + v / 3; };
const zy = function (v) { return 130 + v / 3; };

// end of the profile bars, one every 4px starting at y 122
const profile = [435, 264, 435, 410, 330, 415, 505, 635, 885, 1170, 1255, 1205, 1200, 975, 815, 385, 205, 285, 310, 480, 835, 1060, 1278, 755, 625, 500, 350, 455, 490, 340, 450, 505, 557, 520, 395, 120, 85, 35, 95, 70, 58, 70, 182, 165, 260, 310, 425, 600, 392, 415, 655, 565, 240, 500, 563, 683, 885, 497, 443, 80, 100, 68, 146, 260, 203, 165, 150, 170, 218, 212, 107, 98, 17];

// x, body top, body bottom, wick top, wick bottom, colour (r, g or d for a doji)
const candles = [
    [10,97,109,72,123,'r'],[31,61,109,61,123,'g'],[52,61,109,61,123,'r'],[70,109,133,97,158,'r'],[91,133,133,120,147,'d'],
    [112,109,133,97,147,'g'],[133,121,244,109,244,'r'],[151,244,280,195,295,'r'],[172,232,280,220,295,'g'],[193,232,244,220,257,'r'],
    [212,256,256,232,280,'d'],[232,256,268,244,318,'r'],[253,268,268,256,318,'d'],[274,232,256,195,268,'g'],[292,220,244,195,256,'r'],
    [313,244,256,208,306,'g'],[334,220,244,208,256,'g'],[352,220,232,208,257,'r'],[373,220,232,220,232,'g'],[394,181,232,181,232,'g'],
    [415,109,181,109,208,'g'],[433,109,133,85,158,'r'],[454,85,133,72,133,'g'],[475,85,97,72,122,'r'],[496,61,109,49,109,'g'],
    [514,73,109,49,109,'r'],[535,37,109,25,133,'g'],[553,37,37,25,49,'d'],[574,37,73,25,73,'r'],[595,73,85,49,85,'r'],
    [616,85,133,72,133,'r'],[637,109,133,109,133,'g'],[655,109,169,109,169,'r'],[676,169,208,157,245,'r'],[697,208,244,208,257,'r'],
    [715,220,244,220,257,'g'],[736,220,340,220,377,'r'],[757,340,388,340,413,'r'],[778,376,388,350,413,'r'],[796,352,388,340,388,'g'],
    [817,340,352,340,388,'g'],[838,340,364,340,388,'r'],[859,304,352,304,364,'g'],[877,280,304,268,328,'g'],[898,256,280,232,280,'g'],
    [919,244,256,232,256,'g'],[937,256,280,232,280,'r'],[958,268,280,256,280,'r'],[979,268,328,268,352,'r'],[1000,304,316,292,340,'g'],
    [1018,316,328,280,340,'r'],[1039,328,532,316,545,'r'],[1060,532,592,520,676,'r'],[1078,592,628,592,640,'r'],[1099,628,652,604,676,'r'],
    [1120,580,664,556,676,'g'],[1141,508,580,496,580,'g'],[1159,472,520,472,532,'g'],[1180,484,520,484,520,'r'],[1201,520,544,520,568,'r'],
    [1222,544,556,508,556,'r'],[1240,568,775,568,847,'r'],[1261,775,775,763,775,'d']
];

// x, y, radius, fill, outline
const bubbles = [
    [151,280,22,'#a8eef0','#c8f4f4'],[232,268,20,'#ffb0b0','#ffc8c8'],[274,232,22,'#3fb8c4','#60d8e0'],[313,244,20,'#b8e8ea','#d0f0f0'],
    [415,109,25,'#58c8cc','#80e0e4'],[454,85,18,'#88d8da','#a0e8e8'],[496,61,16,'#0a5a68','#18a8b8'],[535,37,19,'#50c0c4','#70d8dc'],
    [616,133,16,'#f09898','#ffb0b0'],[655,169,18,'#7a1010','#d02020'],[736,340,30,'#882020','#e05050'],[796,352,18,'#fff','#fff'],
    [898,256,15,'#c8f0f0','#dff'],[979,328,18,'#b85858','#e07070'],[1060,592,84,'#d89a9a','#ffc0c0'],[1099,652,37,'#f8b8b8','#ffc8c8'],
    [1085,650,22,'#ffc8c8','#ffd8d8'],[1201,544,15,'#a84848','#e06060'],[1240,775,78,'#ae6264','#ff9090']
];

// volume bars, evenly spaced: colour + top of the bar at 3x scale
const volumes = 't262 r262 r265 t262 t267 t265 r243 t240 t265 t262 t252 r246 t252 t243 r252 t246 r255 t265 r264 t255 t234 r262 t246 r262 t258 r258 t252 t267 r265 r262 r255 t270 r252 r255 r262 t267 r219 r231 t255 r249 t258 r262 t265 t258 t255 r267 r267 r270 r252 t267 r258 r216 r90 r228 r204 t216 t222 t243 r262 r255 r264 r99 r274'.split(' ');

function drawRight() {
    let s = '';
    profile.forEach(function (end, i) {
        const y = 122 + i * 4;
        if (i === 22) return; // that row is under the green level
        s += rect(786, y, end / 3, 2, '#5e5e5e', 'stroke="#6a6a6a" stroke-width=".5"');
    });
    bubbles.forEach(function (b) {
        s += '<circle cx="' + zx(b[0]) + '" cy="' + zy(b[1]) + '" r="' + b[2] / 3 + '" fill="' + b[3] + '" stroke="' + b[4] + '"/>';
    });
    [[1060, 592, 84, 532], [1240, 775, 78, 0]].forEach(function (b) {
        s += line(zx(b[0] - b[2]), zy(b[1]), zx(b[0] + b[2]), zy(b[1]), '#ffb8b8');
        if (b[3]) s += line(zx(b[0] - b[2] + 16), zy(b[3]), zx(b[0] + b[2] - 16), zy(b[3]), '#ffb8b8');
    });
    s += rect(786, 210, 425, 2.5, '#6cb010');
    s += rect(825, 262, 386, 2.5, '#d8b080');
    s += line(786, 388.5, 1288, 388.5, '#808898');
    s += priceAxis(1288, 388, 16.08, 4204, 4184, 1361);
    s += line(1288.5, 97, 1288.5, 525, AXIS);
    candles.forEach(function (c) {
        const x = Math.round(zx(c[0]));
        s += line(x + 0.5, zy(c[3]), x + 0.5, zy(c[4]), '#8c8c8c');
        if (c[5] === 'd') {
            s += line(x - 2, zy(c[1]), x + 3, zy(c[1]), '#8c8c8c');
            return;
        }
        s += rect(x - 1.5, zy(c[1]), 4, Math.max(zy(c[2]) - zy(c[1]), 3), c[5] === 'r' ? '#e01414' : '#40c840', 'stroke="#8c8c8c" stroke-width=".6"');
    });
    // volume panel
    s += rect(786, 456, 577, 110, '#000');
    s += line(786, 456.5, 1363, 456.5, AXIS);
    volumes.forEach(function (v, i) {
        const top = 430 + parseInt(v.slice(1)) / 3;
        s += rect(786 + i * 6.72, top, 5, 523 - top, v[0] === 'r' ? '#990000' : '#0fa6ac');
    });
    s += line(1288.5, 456, 1288.5, 525, AXIS);
    s += line(1288, 516.5, 1300, 516.5, '#fff');
    s += rect(1303.5, 509.5, 52, 15, '#808080', 'stroke="#fff"') + text(1341, 522, 'box-t l', '133');
    s += text(791, 473, 'ohlc', 'Volume 593');
    s += line(786, 527.5, 1363, 527.5, AXIS) + line(786, 547.5, 1363, 547.5, AXIS);
    s += '<use href="#tools" x="789" y="436" width="15" height="15"/>';
    s += text(811, 450, 'ohlc', 'O: 4201.75&nbsp;&nbsp;H: 4203.00&nbsp;&nbsp;L: 4201.75&nbsp;&nbsp;C: 4202.75');
    [['07:57', 849], ['08:36', 939], ['09:18', 1030], ['09:57', 1118]].forEach(function (t) {
        s += text(t[1], 563, 'date-t', t[0]);
    });
    s += rect(1171.5, 550.5, 37, 14, 'none', 'stroke="' + AXIS + '"');
    s += text(1298, 564, 'date-t', '2021.06.03 10:36:00');
    // crosshair and its labels
    s += line(786, 110.5, 1288, 110.5, '#fff', 'stroke-dasharray="3 3"');
    s += line(949.5, 97, 949.5, 527, '#fff', 'stroke-dasharray="3 3"');
    s += rect(888.5, 529.5, 122, 15, '#808080', 'stroke="#e8e8e8"') + text(949.5, 542, 'box-t l', '2021.06.03 08:42:00');
    s += rect(1303.5, 103.5, 61, 15, '#808080', 'stroke="#e8e8e8"') + text(1334, 116, 'box-t l', '4205.25');
    s += poly('1293,388.500 1313,380 1363,380 1363,397 1313,397', '#808080') + text(1337, 393, 'box-t b', '4188.00');
    s += poly('1203,98 1213,98 1208,103', '#b0c0e0');
    s += '<text x="1264" y="406" class="cntd" text-anchor="end">15:36:11</text><text x="1265" y="419" class="cntd" text-anchor="end">02:47</text>';
    document.getElementById('plot-right').innerHTML = s;
}

drawLeft();
drawRight();
```
